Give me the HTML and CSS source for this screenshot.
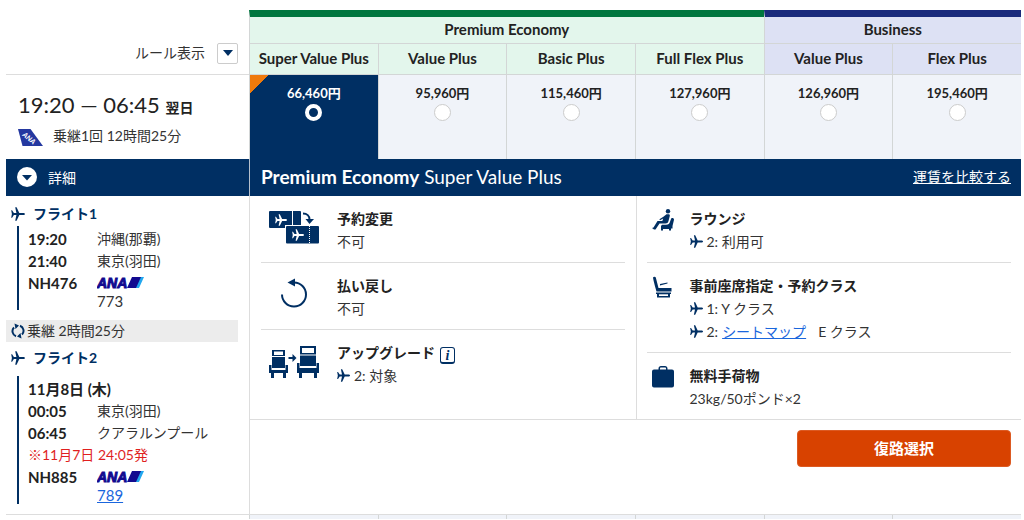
FILE: index.html
```html
<!DOCTYPE html>
<html lang="ja">
<head>
    <meta charset="UTF-8">
    <meta name="viewport" content="width=device-width, initial-scale=1.0">
    <title>フライト選択</title>
    <link rel="stylesheet" href="styles.css">
</head>
<body>
    <!-- shared icons -->
    <svg class="sprite" width="0" height="0" aria-hidden="true">
        <symbol id="plane" viewBox="0 0 14 14">
            <path d="M14 7c0-.7-.8-1.100-2-1.100H8.300L5.600.3H4.200l1.200 5.600H2.900L1.100 3.200H.2L.9 7l-.7 3.800h.9l1.800-2.700h2.500L4.200 13.700h1.400l2.700-5.600H12c1.200 0 2-.4 2-1.100z"/>
        </symbol>
    </svg>

    <table class="fares">
        <colgroup>
            <col class="col-flight">
            <col span="6">
        </colgroup>
        <thead>
            <tr class="group-row">
                <td class="rule" rowspan="2">
                    <div class="rule-inner">
                        <span id="ruleLabel">ルール表示</span>
                        <button class="rule-button" type="button" aria-labelledby="ruleLabel">
                            <svg width="10" height="6" viewBox="0 0 10 6"><path d="M0 0h10L5 6z"/></svg>
                        </button>
                    </div>
                </td>
                <th class="premium group" colspan="4">Premium Economy</th>
                <th class="business group" colspan="2">Business</th>
            </tr>
            <tr class="name-row">
                <th class="premium">Super Value Plus</th>
                <th class="premium">Value Plus</th>
                <th class="premium">Basic Plus</th>
                <th class="premium">Full Flex Plus</th>
                <th class="business">Value Plus</th>
                <th class="business">Flex Plus</th>
            </tr>
        </thead>
        <tbody>
            <tr class="price-row">
                <td class="summary">
                    <div class="times">19:20 — 06:45 <b>翌日</b></div>
                    <div class="duration">
                        <svg class="tail" width="25" height="17" viewBox="0 0 25 17">
                            <path d="M0 0h12.500L25 17H4.500z"/>
                            <text x="4" y="6.500" transform="rotate(40 4 6.500)">ANA</text>
                        </svg>
                        <span>乗継1回 12時間25分</span>
                    </div>
                </td>
                <td class="price selected"><label>66,460円<input type="radio" name="fare" checked></label></td>
                <td class="price"><label>95,960円<input type="radio" name="fare"></label></td>
                <td class="price"><label>115,460円<input type="radio" name="fare"></label></td>
                <td class="price"><label>127,960円<input type="radio" name="fare"></label></td>
                <td class="price"><label>126,960円<input type="radio" name="fare"></label></td>
                <td class="price"><label>195,460円<input type="radio" name="fare"></label></td>
            </tr>
            <tr class="bar-row">
                <td>
                    <button class="detail-toggle" type="button">
                        <svg width="20" height="20" viewBox="0 0 20 20"><circle cx="10" cy="10" r="10"/><path d="M5 8h10l-5 5.500z"/></svg>
                        詳細
                    </button>
                </td>
                <td colspan="6">
                    <div class="fare-bar">
                        <span class="fare-name"><b>Premium Economy</b> Super Value Plus</span>
                        <a href="#">運賃を比較する</a>
                    </div>
                </td>
            </tr>
            <tr class="detail-row">
                <td class="flights">
                    <h3 class="flight-title"><svg class="plane" width="14" height="14"><use href="#plane"/></svg>フライト1</h3>
                    <div class="segment">
                        <b>19:20</b><span>沖縄(那覇)</span>
                        <b>21:40</b><span>東京(羽田)</span>
                        <b>NH476</b>
                        <span class="carrier">
                            <svg width="48" height="14" viewBox="0 0 48 14">
                                <text x="0" y="12">ANA</text>
                                <path class="ana-light" d="M38 12 43 1h4l-5 11z"/>
                                <path class="ana-dark" d="M30 12 35 1h9l-5 11z"/>
                            </svg>
                        </span>
                        <span class="aircraft">773</span>
                    </div>
                    <div class="transfer">
                        <svg width="14" height="16" viewBox="0 0 14 16">
                            <path class="arc" d="M5 13.200A5.300 5.300 0 0 1 3 4.500M9 2.800a5.300 5.300 0 0 1 2 8.700"/>
                            <path d="M3.500.5l4.500 2L4.500 6zM10.500 15.500 6 13.500 9.500 10z"/>
                        </svg>
                        乗継 2時間25分
                    </div>
                    <h3 class="flight-title"><svg class="plane" width="14" height="14"><use href="#plane"/></svg>フライト2</h3>
                    <div class="segment dated">
                        <b class="wide">11月8日 (木)</b>
                        <b>00:05</b><span>東京(羽田)</span>
                        <b>06:45</b><span>クアラルンプール</span>
                        <span class="wide notice">※11月7日 24:05発</span>
                        <b>NH885</b>
                        <span class="carrier">
                            <svg width="48" height="14" viewBox="0 0 48 14">
                                <text x="0" y="12">ANA</text>
                                <path class="ana-light" d="M38 12 43 1h4l-5 11z"/>
                                <path class="ana-dark" d="M30 12 35 1h9l-5 11z"/>
                            </svg>
                        </span>
                        <span class="aircraft"><a href="#">789</a></span>
                    </div>
                </td>
                <td class="conditions" colspan="6">
                    <div class="condition-columns">
                        <div class="column">
                            <div class="item">
                                <div class="icon">
                                    <svg width="50" height="34" viewBox="0 0 50 34">
                                        <path d="M1 0h22v17H1a1 1 0 0 1-1-1V1a1 1 0 0 1 1-1zM24 0h7a1 1 0 0 1 1 1v14H24z"/>
                                        <rect class="gap" x="16" y="14" width="34" height="19"/>
                                        <path d="M18 15h31a1 1 0 0 1 1 1v15.500a1 1 0 0 1-1 1H18a1 1 0 0 1-1-1V16a1 1 0 0 1 1-1z"/>
                                        <path class="dots" d="M23.500 0v14M40.500 15v18"/>
                                        <svg class="white" x="6" y="3" width="12" height="12"><use href="#plane"/></svg>
                                        <svg class="white" x="23" y="18" width="12" height="12"><use href="#plane"/></svg>
                                        <path class="arc" d="M34 2.500c4 0 6.500 2.500 6.500 6"/>
                                        <path d="M36.500 8h8.500l-4.500 5z"/>
                                    </svg>
                                </div>
                                <div class="text">
                                    <h4>予約変更</h4>
                                    <p>不可</p>
                                </div>
                            </div>
                            <div class="item">
                                <div class="icon">
                                    <svg width="50" height="34" viewBox="0 0 50 34">
                                        <path class="ring" d="M13 16.500a12 12 0 1 0 12-12h-2"/>
                                        <path d="M26 .5v8L18.500 4.500z"/>
                                    </svg>
                                </div>
                                <div class="text">
                                    <h4>払い戻し</h4>
                                    <p>不可</p>
                                </div>
                            </div>
                            <div class="item">
                                <div class="icon">
                                    <svg width="50" height="34" viewBox="0 0 50 34">
                                        <path d="M3 5h13v18H3zM0 20h2.500v5h14v-5H19v8h-2v5h-3v-5H5v5H2v-5H0z"/>
                                        <path d="M31 1h16v20H31zM28 18h2.500v5h17v-5H50v10h-2v5h-3v-5H33v5h-3v-5h-2z"/>
                                        <path class="white" d="M5 6.500h9V10H5zM33 3h12v5H33zM3 11h13v1H3zM31 9.500h16v1H31z"/>
                                        <path d="M19.500 12h4V9l4 4-4 4v-3h-4z"/>
                                    </svg>
                                </div>
                                <div class="text">
                                    <h4>アップグレード <button class="info" type="button" aria-label="アップグレードについて">i</button></h4>
                                    <p><svg class="plane" width="13" height="13"><use href="#plane"/></svg> 2: 対象</p>
                                </div>
                            </div>
                        </div>
                        <div class="column narrow">
                            <div class="item">
                                <div class="icon">
                                    <svg width="22" height="22" viewBox="0 0 22 22">
                                        <circle cx="16" cy="2.200" r="2.200"/>
                                        <path d="M14.500 5.200h2c1 0 1.500.7 1.300 1.700L16.500 12c-.4 1.700-1.300 2.500-3 2.500H7.500L3.500 20.500H2L0 19l1.500-.5L5.500 12h4.800l.9-2.500-3.200 1.700-.6-1 4-2.500z"/>
                                        <path d="M19.200 9.500c1.300-1 2.800-.2 2.800 1.200L20.500 17v2.500H19v2h-2v-1.500h-6v1.500H9V17l1-1.300h4c2.500 0 3.500-1 4-3z"/>
                                    </svg>
                                </div>
                                <div class="text">
                                    <h4>ラウンジ</h4>
                                    <p><svg class="plane" width="13" height="13"><use href="#plane"/></svg> 2: 利用可</p>
                                </div>
                            </div>
                            <div class="item">
                                <div class="icon">
                                    <svg width="22" height="22" viewBox="0 0 22 22">
                                        <path d="M1 1.500C1.500.5 3.500.5 3.800 1.500L6.500 12h13v3.500H4.500C3.500 12 1.500 5 1 1.500zM8 8l7.500-1.500v1L8 9.500zM4 16.500h15V18h-1v3.500H5V18H4z"/>
                                        <path class="white" d="M7 18.300h9V20H7z"/>
                                    </svg>
                                </div>
                                <div class="text">
                                    <h4>事前座席指定・予約クラス</h4>
                                    <p><svg class="plane" width="13" height="13"><use href="#plane"/></svg> 1: Y クラス</p>
                                    <p><svg class="plane" width="13" height="13"><use href="#plane"/></svg> 2: <a class="seat-map" href="#">シートマップ</a> E クラス</p>
                                </div>
                            </div>
                            <div class="item">
                                <div class="icon">
                                    <svg width="22" height="22" viewBox="0 0 22 22">
                                        <path d="M2 3.500h4.500V2.500C6.500 1 7.500 0 9 0h4c1.500 0 2.500 1 2.500 2.500v1H20a2 2 0 0 1 2 2v14a2 2 0 0 1-2 2H2a2 2 0 0 1-2-2v-14a2 2 0 0 1 2-2z"/>
                                        <path class="white" d="M8 3.500v-1c0-.6.4-1 1-1h4c.6 0 1 .4 1 1v1z"/>
                                    </svg>
                                </div>
                                <div class="text">
                                    <h4>無料手荷物</h4>
                                    <p>23kg/50ポンド×2</p>
                                </div>
                            </div>
                        </div>
                    </div>
                    <div class="actions">
                        <button class="select-button" type="button">復路選択</button>
                    </div>
                </td>
            </tr>
            <tr class="next-row">
                <td></td>
                <td class="price"></td>
                <td class="price"></td>
                <td class="price"></td>
                <td class="price"></td>
                <td class="price"></td>
                <td class="price"></td>
            </tr>
        </tbody>
    </table>
</body>
</html>
```
FILE: styles.css
```css
* {
    box-sizing: border-box;
    margin: 0;
    padding: 0;
}

body {
    padding: 10px 3px 0 6px;
    background: #fff;
    color: #333;
    font-family: Lato, "Noto Sans CJK JP", sans-serif;
    font-size: 14px;
    line-height: 22px;
}

button {
    font-family: inherit;
    cursor: pointer;
}

b, h3, h4, th {
    color: #222;
    font-weight: bold;
}

a {
    color: #1a66dd;
}

svg {
    flex: none;
    fill: #002f63;
}

.sprite {
    position: absolute;
}

.fares {
    width: 100%;
    table-layout: fixed;
    border-collapse: separate;
    border-spacing: 0;
}

.col-flight {
    width: 243px;
}

/* header */
.group-row {
    height: 34px;
}

.name-row {
    height: 31px;
}

.fares th {
    padding-bottom: 3px;
    border-left: 1px solid #d3d6d6;
    border-bottom: 1px solid #d3d6d6;
    font-size: 15px;
    white-space: nowrap;
}

.premium {
    background: #e3f6ec;
}

.business {
    background: #dde1f4;
}

.premium.group {
    border-top: 7px solid #00773f;
}

.business.group {
    border-top: 7px solid #1a2b7c;
}

.rule {
    border-bottom: 1px solid #ddd;
    vertical-align: bottom;
}

.rule-inner {
    display: flex;
    justify-content: flex-end;
    align-items: center;
    gap: 12px;
    padding: 0 11px 10px 0;
}

.rule-button {
    display: flex;
    align-items: center;
    justify-content: center;
    width: 21px;
    height: 21px;
    background: #fff;
    border: 1px solid #ccc;
    border-radius: 2px;
}

/* prices */
.price-row {
    height: 84px;
}

.summary {
    padding: 18px 0 0 12px;
    vertical-align: top;
}

.times {
    color: #222;
    font-size: 22px;
    line-height: 24px;
}

.times b {
    font-size: 14px;
}

.duration {
    display: flex;
    align-items: center;
    gap: 10px;
    margin-top: 5px;
}

.duration span {
    padding-bottom: 3px;
}

.tail path {
    fill: #2438a0;
}

.tail text {
    fill: #fff;
    font-size: 7px;
    font-style: italic;
    font-weight: 900;
}

.price {
    padding-top: 9px;
    background: #f0f3f9;
    border-left: 1px solid #d3d6d6;
    color: #222;
    font-size: 13px;
    font-weight: bold;
    line-height: 18px;
    text-align: center;
    vertical-align: top;
}

.price label {
    display: block;
}

.price input {
    appearance: none;
    display: block;
    width: 17px;
    height: 17px;
    margin: 2px auto 0;
    background: #fff;
    border: 1px solid #ccc;
    border-radius: 50%;
}

.price.selected {
    background: linear-gradient(135deg, #ef7a0c 13px, #002f63 13px);
    color: #fff;
}

.price input:checked {
    background: #002f63;
    border: 4px solid #fff;
}

/* detail heading */
.bar-row {
    height: 37px;
    background: #002f63;
}

.bar-row td {
    padding-bottom: 2px;
}

.bar-row td + td {
    border-left: 1px solid #b5c0cd;
}

.detail-toggle {
    display: flex;
    align-items: center;
    gap: 11px;
    padding-left: 11px;
    background: none;
    border: 0;
    color: #fff;
    font-size: 14px;
}

.detail-toggle circle {
    fill: #fff;
}

.fare-bar {
    display: flex;
    justify-content: space-between;
    align-items: center;
    padding: 0 10px 0 11px;
    color: #fff;
}

.fare-bar b, .fare-bar a {
    color: #fff;
}

.fare-name {
    font-size: 19px;
}

/* flights */
.detail-row td {
    vertical-align: top;
    border-bottom: 1px solid #ddd;
}

.flights {
    padding: 7px 11px 0 0;
}

.flight-title {
    display: flex;
    align-items: center;
    gap: 8px;
    padding-left: 5px;
    color: #002f63;
    font-size: 14px;
}

.segment {
    display: grid;
    grid-template-columns: 69px 1fr;
    margin: 1px 0 10px 11px;
    padding: 2px 0 2px 9px;
    border-left: 2px solid #002f63;
}

.segment.dated {
    margin-top: 7px;
}

.segment b {
    font-size: 15px;
    white-space: nowrap;
}

.segment .wide {
    grid-column: span 2;
}

.segment .notice {
    color: #e01f1f;
}

.carrier svg {
    display: block;
    margin-top: 4px;
}

.carrier text {
    fill: #120a8f;
    stroke: #120a8f;
    stroke-width: 1;
    font-family: "Liberation Sans", sans-serif;
    font-size: 14px;
    font-style: italic;
    font-weight: bold;
}

.ana-dark {
    fill: #120a8f;
}

.ana-light {
    fill: #22a7ee;
}

.aircraft {
    grid-column: 2;
    font-size: 15px;
    line-height: 14px;
}

.transfer {
    display: flex;
    align-items: center;
    gap: 2px;
    margin-bottom: 5px;
    padding-left: 5px;
    background: #ececec;
}

.arc {
    fill: none;
    stroke: #002f63;
    stroke-width: 2;
}

/* fare conditions */
.conditions {
    border-left: 1px solid #ddd;
}

.condition-columns {
    display: grid;
    grid-template-columns: 1fr 1fr;
    border-bottom: 1px solid #ddd;
    line-height: 23px;
}

.column {
    padding: 0 11px;
}

.column + .column {
    padding: 0 10px;
    border-left: 1px solid #ddd;
}

.item {
    display: flex;
    gap: 18px;
    padding: 11px 0 9px;
    border-bottom: 1px solid #ddd;
}

.item:last-child {
    border-bottom: 0;
}

.icon {
    padding: 4px 0 0 8px;
}

.narrow .item {
    gap: 16px;
}

.narrow .icon {
    padding: 2px 0 0 5px;
}

.icon svg {
    display: block;
}

.icon .gap, .icon .white {
    fill: #fff;
}

.dots {
    stroke: #fff;
    stroke-width: 1;
    stroke-dasharray: 1 1;
}

.ring {
    fill: none;
    stroke: #002f63;
    stroke-width: 2;
}

.item h4 {
    display: flex;
    align-items: center;
    gap: 5px;
    font-size: 14px;
}

.item p {
    display: flex;
    align-items: center;
    gap: 4px;
}

.seat-map {
    margin-right: 8px;
}

.info {
    align-self: flex-end;
    width: 15px;
    height: 17px;
    background: #fff;
    border: 1px solid #002f63;
    border-bottom-width: 2px;
    border-radius: 3px;
    color: #002f63;
    font-family: "Liberation Serif", serif;
    font-size: 14px;
    font-style: italic;
    font-weight: bold;
    line-height: 13px;
}

.actions {
    display: flex;
    justify-content: flex-end;
    padding: 10px;
}

.select-button {
    width: 214px;
    height: 37px;
    padding-bottom: 3px;
    background: #d84200;
    border: 1px solid #dc5a22;
    border-radius: 4px;
    color: #fff;
    font-size: 15px;
    font-weight: bold;
}

.next-row {
    height: 4px;
}

.next-row .price {
    padding: 0;
}
```
